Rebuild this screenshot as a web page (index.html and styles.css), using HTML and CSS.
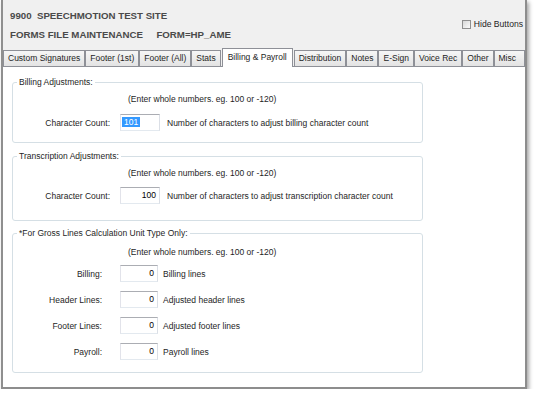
FILE: index.html
```html
<!DOCTYPE html>
<html lang="en">
<head>
  <meta charset="UTF-8" />
  <title>Forms File Maintenance</title>
  <link rel="stylesheet" href="styles.css">
</head>
<body>
  <div class="window">
    <div class="header">
      <div class="titles">
        <div>9900&nbsp;&nbsp;SPEECHMOTION TEST SITE</div>
        <div>FORMS FILE MAINTENANCE&nbsp;&nbsp;&nbsp;&nbsp; FORM=HP_AME</div>
      </div>
      <label class="hide-btn"><span class="check"></span>Hide Buttons</label>
    </div>

    <ul class="tabs">
      <li>Custom Signatures</li>
      <li>Footer (1st)</li>
      <li>Footer (All)</li>
      <li>Stats</li>
      <li class="active">Billing &amp; Payroll</li>
      <li>Distribution</li>
      <li>Notes</li>
      <li>E-Sign</li>
      <li>Voice Rec</li>
      <li>Other</li>
      <li class="last">Misc</li>
    </ul>

    <div class="panel">
      <fieldset class="group first">
        <legend>Billing Adjustments:</legend>
        <p class="hint">(Enter whole numbers. eg. 100 or -120)</p>
        <div class="row">
          <label>Character Count:</label>
          <div class="field selected"><span class="sel">101</span></div>
          <span class="desc">Number of characters to adjust billing character count</span>
        </div>
      </fieldset>

      <fieldset class="group second">
        <legend>Transcription Adjustments:</legend>
        <p class="hint">(Enter whole numbers. eg. 100 or -120)</p>
        <div class="row">
          <label>Character Count:</label>
          <div class="field">100</div>
          <span class="desc">Number of characters to adjust transcription character count</span>
        </div>
      </fieldset>

      <fieldset class="group gross">
        <legend>*For Gross Lines Calculation Unit Type Only:</legend>
        <p class="hint">(Enter whole numbers. eg. 100 or -120)</p>
        <div class="row">
          <label>Billing:</label>
          <div class="field">0</div>
          <span class="desc">Billing lines</span>
        </div>
        <div class="row">
          <label>Header Lines:</label>
          <div class="field">0</div>
          <span class="desc">Adjusted header lines</span>
        </div>
        <div class="row">
          <label>Footer Lines:</label>
          <div class="field">0</div>
          <span class="desc">Adjusted footer lines</span>
        </div>
        <div class="row">
          <label>Payroll:</label>
          <div class="field">0</div>
          <span class="desc">Payroll lines</span>
        </div>
      </fieldset>
    </div>
  </div>
</body>
</html>
```

FILE: styles.css
```css
* {
  box-sizing: border-box;
}

body {
  margin: 0;
  background: #fff;
  font-family: 'Liberation Sans', Arial, sans-serif;
  font-size: 8.5px;
  color: #1e1e1e;
}

.window {
  margin-left: 1px;
  width: 526px;
  height: 389px;
  border-left: 2px solid #8f8f8f;
  border-right: 2px solid #8d8d8d;
  border-bottom: 2px solid #8d8d8d;
  background: #f0f0f0;
  box-shadow: 2px 2px 4px rgba(0,0,0,0.35);
  display: flex;
  flex-direction: column;
}

.header {
  height: 50px;
  display: flex;
  justify-content: space-between;
  padding: 6px 2px 0 7px;
}

.titles {
  font-weight: bold;
  font-size: 9.7px;
  line-height: 19px;
  color: #4a4a4a;
}

.hide-btn {
  display: flex;
  align-items: center;
  gap: 3px;
  margin-top: 12px;
  height: 12px;
  font-size: 8.6px;
}

.check {
  width: 9px;
  height: 9px;
  border: 1px solid #8f8f8f;
  background: linear-gradient(135deg, #d8d8d8, #fbfbfb);
}

.tabs {
  list-style: none;
  margin: 0;
  padding: 0;
  height: 16px;
  display: flex;
  align-items: flex-end;
}

.tabs li {
  height: 16px;
  line-height: 14px;
  padding: 0 4px;
  border: 1px solid #8e9097;
  border-bottom: none;
  background: linear-gradient(#f6f6f6, #e3e3e3);
  white-space: nowrap;
}

.tabs li + li {
  margin-left: 0;
}

.tabs li.active {
  height: 19px;
  line-height: 16px;
  padding: 0 5px;
  margin: 0 1px -1px;
  background: #fff;
  position: relative;
  z-index: 1;
}

.tabs li.last {
  padding-right: 8px;
}

.panel {
  flex: 1;
  background: #fff;
  border-top: 1px solid #8e9097;
  padding: 9px 0 0 9px;
}

.group {
  margin: 0;
  width: 411px;
  min-width: 0;
  border: 1px solid #d5dfe5;
  border-radius: 3px;
  padding: 0 0 11px 0;
}

.group legend {
  margin-left: 4px;
  padding: 0 2px;
  line-height: 12px;
}

.second {
  margin-top: 7px;
  padding-bottom: 16px;
}

.gross {
  margin-top: 6px;
  padding-bottom: 12px;
}

.hint {
  margin: 5px 0 0 115px;
  line-height: 12px;
}

.row {
  display: flex;
  align-items: center;
  height: 17px;
  margin-top: 9px;
}

.second .row {
  margin-top: 8px;
}

.row label {
  width: 97px;
  text-align: right;
}

.field {
  width: 40px;
  height: 17px;
  margin-left: 10px;
  border: 1px solid;
  border-color: #abadb3 #dbdfe6 #e3e9ef #e2e3ea;
  padding: 0 3px;
  line-height: 15px;
  text-align: right;
  color: #000;
}

.field.selected {
  text-align: left;
  padding-left: 1px;
}

.sel {
  background: #3399ff;
  color: #fff;
  padding: 0 2px;
}

.desc {
  margin-left: 7px;
}

.gross .hint {
  margin-top: 7px;
}

.gross .row:first-of-type {
  margin-top: 7px;
}

.gross .row label {
  width: 89px;
}

.gross .field {
  width: 38px;
  margin-left: 18px;
}

.gross .desc {
  margin-left: 5px;
}
```
